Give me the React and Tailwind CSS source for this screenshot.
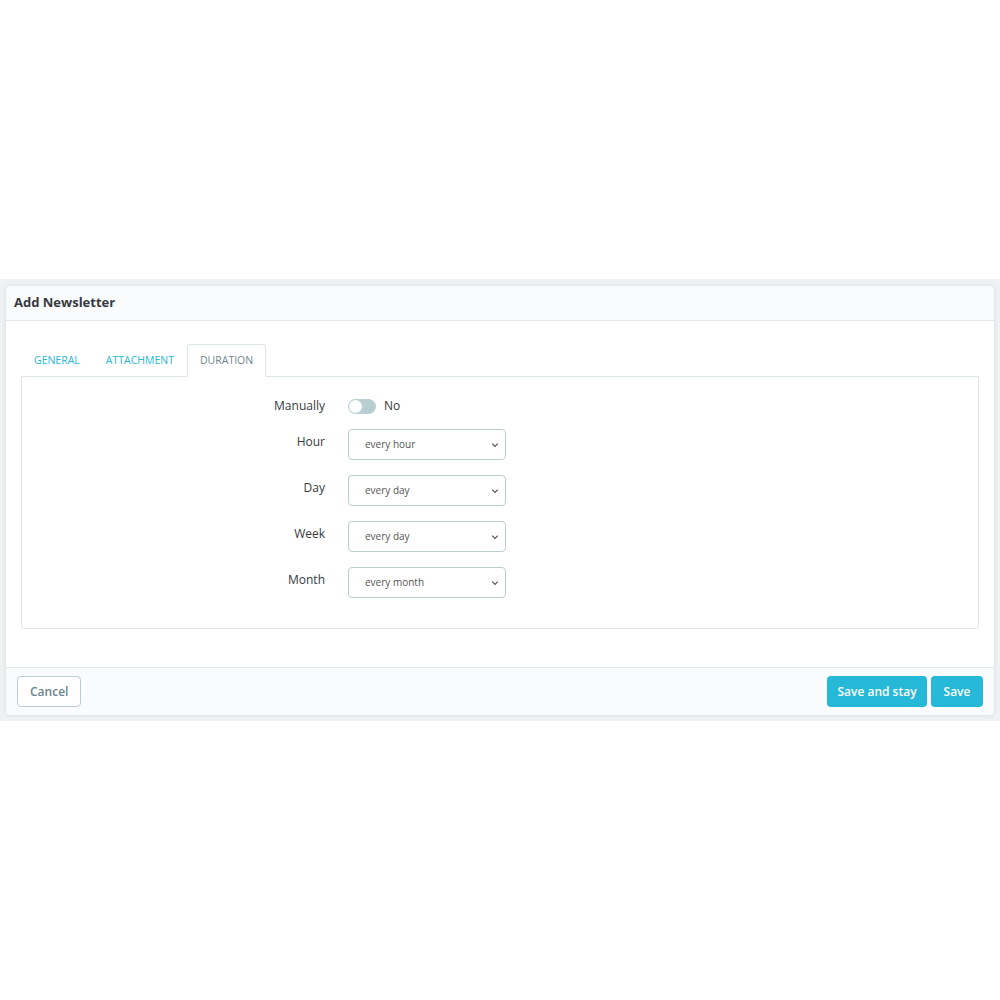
import { useState } from "react";

const ROWS = [
  { label: "Hour", value: "every hour" },
  { label: "Day", value: "every day" },
  { label: "Week", value: "every day" },
  { label: "Month", value: "every month" },
];

function Select({ value }) {
  return (
    <div className="relative flex h-[31px] w-[158px] items-center rounded-[4px] border border-[#bbcdd2] bg-white pl-4 text-[10px] text-[#555]">
      {value}
      <svg className="absolute right-[6px] top-1/2 -translate-y-1/2" width="8" height="8" viewBox="0 0 8 8">
        <path d="M1.2 2.6 L4 5.4 L6.8 2.6" fill="none" stroke="#555" strokeWidth="1.3" />
      </svg>
    </div>
  );
}

export default function App() {
  const [tab] = useState("duration");
  return (
    <div className="min-h-[1000px] bg-white font-['Open_Sans',sans-serif] text-[#363a41]">
      <div className="h-[279px]" />
      <div className="bg-[#eff1f2] px-[5px] pb-[5px] pt-[6px]">
        <div className="rounded-[5px] border border-[#e3e8ea] bg-white shadow-[0_0_4px_rgba(0,0,0,0.06)]">
          <div className="flex h-[35px] items-center rounded-t-[5px] border-b border-[#e3e8ea] bg-[#fafbfc] px-2">
            <h2 className="text-[13px] font-bold text-[#363a41]">Add Newsletter</h2>
          </div>

          <div className="px-[15px] pb-[38px] pt-[22px]">
            <div className="flex h-[33px] items-end text-[10.5px]">
              <button className="px-[13px] pb-[7px] text-[#25b9d7]">GENERAL</button>
              <button className="px-[13px] pb-[7px] text-[#25b9d7]">ATTACHMENT</button>
              <button className={`relative -mb-px h-[33px] rounded-t-[3px] border border-b-white border-[#dfe6e8] bg-white px-[12px] ${tab === "duration" ? "text-[#6c868e]" : ""}`}>
                DURATION
              </button>
            </div>
            <div className="rounded-b-[3px] border border-[#dfe6e8] pb-[30px] pt-[20px]">
              <div className="flex items-center">
                <div className="w-[326px] pr-[23px] text-right text-[12px] text-[#363a41]">Manually</div>
                <div className="flex items-center gap-2">
                  <div className="relative h-[15px] w-[28px] rounded-full bg-[#b7ced3]">
                    <div className="absolute left-[1px] top-[1px] h-[13px] w-[13px] rounded-full bg-white" />
                  </div>
                  <span className="text-[12px] text-[#363a41]">No</span>
                </div>
              </div>
              <div className="mt-[14px] flex flex-col gap-[15px]">
                {ROWS.map((r) => (
                  <div key={r.label} className="flex items-start">
                    <div className="w-[326px] pr-[23px] pt-[4px] text-right text-[12px] text-[#363a41]">{r.label}</div>
                    <Select value={r.value} />
                  </div>
                ))}
              </div>
            </div>
          </div>

          <div className="flex h-[48px] items-center justify-between rounded-b-[5px] border-t border-[#e3e8ea] bg-[#fafbfc] px-[11px]">
            <button className="h-[31px] rounded-[4px] border border-[#bbcdd2] bg-white px-[12px] text-[12px] font-semibold text-[#6c868e]">
              Cancel
            </button>
            <div className="flex gap-[4px]">
              <button className="h-[31px] w-[100px] rounded-[4px] bg-[#25b9d7] text-[12px] font-semibold text-white">Save and stay</button>
              <button className="h-[31px] w-[52px] rounded-[4px] bg-[#25b9d7] text-[12px] font-semibold text-white">Save</button>
            </div>
          </div>
        </div>
      </div>
    </div>
  );
}
